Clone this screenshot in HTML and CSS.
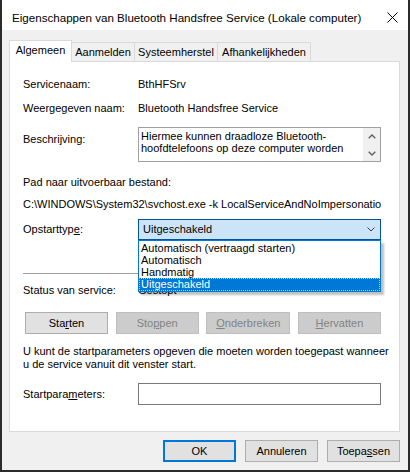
FILE: index.html
```html
<!DOCTYPE html>
<html lang="nl">
<head>
    <meta charset="UTF-8">
    <title>Eigenschappen van Bluetooth Handsfree Service</title>
    <link rel="stylesheet" href="styles.css">
</head>
<body>

<div class="window">
    <div class="titlebar">
        <span class="title">Eigenschappen van Bluetooth Handsfree Service (Lokale computer)</span>
        <svg class="close" width="11" height="11" viewBox="0 0 11 11">
            <path d="M0.5 0.5 L10.5 10.5 M10.5 0.5 L0.5 10.5" stroke="#000" stroke-width="1" fill="none"/>
        </svg>
    </div>

    <div class="main">
        <div class="tabs">
            <div class="tab tab-active tab-general">Algemeen</div>
            <div class="tab tab-logon">Aanmelden</div>
            <div class="tab tab-recovery">Systeemherstel</div>
            <div class="tab tab-deps">Afhankelijkheden</div>
        </div>

        <div class="panel">
            <div class="field">
                <span>Servicenaam:</span>
                <span>BthHFSrv</span>
            </div>
            <div class="field field-display">
                <span>Weergegeven naam:</span>
                <span>Bluetooth Handsfree Service</span>
            </div>
            <div class="field field-desc">
                <span class="desc-label">Beschrijving:</span>
                <div class="desc-box">
                    <div class="desc-text">Hiermee kunnen draadloze Bluetooth-<br>hoofdtelefoons op deze computer worden</div>
                    <div class="scrollbar">
                        <div class="scroll-btn">
                            <svg width="8" height="5" viewBox="0 0 8 5"><path d="M0.7 4.3 L4 1 L7.3 4.3" stroke="#606060" stroke-width="1.4" fill="none"/></svg>
                        </div>
                        <div class="scroll-btn">
                            <svg width="8" height="5" viewBox="0 0 8 5"><path d="M0.7 0.7 L4 4 L7.3 0.7" stroke="#606060" stroke-width="1.4" fill="none"/></svg>
                        </div>
                    </div>
                </div>
            </div>
            <div class="path-label">Pad naar uitvoerbaar bestand:</div>
            <div class="path-value">C:\WINDOWS\System32\svchost.exe -k LocalServiceAndNoImpersonation -p</div>

            <div class="field field-startup">
                <span>Opstarttyp<u>e</u>:</span>
                <div class="combo-wrap">
                    <div class="combo">
                        <span>Uitgeschakeld</span>
                        <svg width="8" height="5" viewBox="0 0 8 5"><path d="M0.5 0.5 L4 4 L7.5 0.5" stroke="#404040" stroke-width="1" fill="none"/></svg>
                    </div>
                    <ul class="combo-list">
                        <li>Automatisch (vertraagd starten)</li>
                        <li>Automatisch</li>
                        <li>Handmatig</li>
                        <li class="selected">Uitgeschakeld</li>
                    </ul>
                </div>
            </div>

            <div class="separator"></div>

            <div class="field field-status">
                <span>Status van service:</span>
                <span>Gestopt</span>
            </div>

            <div class="service-buttons">
                <button class="btn">Sta<u>r</u>ten</button>
                <button class="btn" disabled>Sto<u>p</u>pen</button>
                <button class="btn btn-wide" disabled><u>O</u>nderbreken</button>
                <button class="btn" disabled><u>H</u>ervatten</button>
            </div>

            <p class="hint">U kunt de startparameters opgeven die moeten worden toegepast wanneer<br>u de service vanuit dit venster start.</p>

            <div class="field field-params">
                <span>Startpara<u>m</u>eters:</span>
                <div class="text-input"></div>
            </div>
        </div>

        <div class="dialog-buttons">
            <button class="btn btn-dialog btn-default">OK</button>
            <button class="btn btn-dialog">Annuleren</button>
            <button class="btn btn-dialog">Toepa<u>s</u>sen</button>
        </div>
    </div>
</div>

</body>
</html>
```

FILE: styles.css
```css
* {
    box-sizing: border-box;
}
body {
    margin: 0;
    font-family: "Liberation Sans", Arial, sans-serif;
    font-size: 11px;
    color: #000;
}
.window {
    width: 410px;
    height: 472px;
    border: 2px solid #2b2b2b;
    border-top: 0;
    background-color: #f0f0f0;
    display: flex;
    flex-direction: column;
}
.titlebar {
    height: 30px;
    flex-shrink: 0;
    background-color: #fff;
    display: flex;
    align-items: center;
    padding: 4px 10px 0 10px;
    font-size: 11.6px;
}
.title {
    flex: 1;
    white-space: nowrap;
}
.main {
    flex: 1;
    padding: 10px 8px 0 7px;
}

/* tabs */
.tabs {
    display: flex;
    align-items: flex-end;
    height: 21px;
    position: relative;
    z-index: 1;
}
.tab {
    height: 19px;
    border: 1px solid #d9d9d9;
    border-left: 0;
    border-bottom: 0;
    display: flex;
    align-items: center;
    justify-content: center;
    line-height: 13px;
}
.tab-active {
    height: 22px;
    margin-bottom: -1px;
    padding-bottom: 3px;
    border-left: 1px solid #d9d9d9;
    background-color: #fff;
}
.tab-general { width: 63px; }
.tab-logon { width: 63px; }
.tab-recovery { width: 83px; }
.tab-deps { width: 93px; }

/* tab page */
.panel {
    background-color: #fff;
    border: 1px solid #d9d9d9;
    padding: 16px 18px 26px 13px;
}
.field {
    display: grid;
    grid-template-columns: 115px 1fr;
    line-height: 13px;
    white-space: nowrap;
}
.field-display {
    margin-top: 11px;
}
.field-desc {
    margin-top: 12px;
}
.desc-label {
    margin-top: 6px;
}
.desc-box {
    height: 35px;
    border: 1px solid #a0a0a0;
    display: flex;
}
.desc-text {
    flex: 1;
    padding: 2px 0 0 2px;
    line-height: 12px;
}
.scrollbar {
    width: 17px;
    background-color: #f0f0f0;
    display: flex;
    flex-direction: column;
    justify-content: space-between;
}
.scroll-btn {
    height: 16px;
    display: flex;
    align-items: center;
    justify-content: center;
}
.path-label {
    margin-top: 14px;
    line-height: 13px;
}
.path-value {
    margin-top: 9px;
    line-height: 13px;
    white-space: nowrap;
    overflow: hidden;
}

/* startup type combo */
.field-startup {
    margin-top: 8px;
    align-items: center;
}
.combo-wrap {
    position: relative;
}
.combo {
    height: 21px;
    border: 1px solid #005499;
    background-color: #cce4f7;
    display: flex;
    align-items: center;
    justify-content: space-between;
    padding: 0 5px 0 4px;
}
.combo-list {
    position: absolute;
    top: 21px;
    left: 0;
    right: 0;
    margin: 0;
    padding: 1px 0 0 0;
    list-style: none;
    background-color: #fff;
    border: 1px solid #0078d7;
    box-shadow: 3px 3px 2px rgba(0, 0, 0, 0.25);
    z-index: 2;
}
.combo-list li {
    height: 12px;
    line-height: 12px;
    padding-left: 2px;
}
.combo-list li.selected {
    height: 13px;
    line-height: 13px;
    background-color: #0078d7;
    color: #fff;
    outline: 1px dotted #f3c28c;
    outline-offset: -1px;
}
.separator {
    margin-top: 33px;
    height: 1px;
    background-color: #a0a0a0;
}
.field-status {
    margin-top: 10px;
}

/* buttons */
.btn {
    height: 22px;
    padding: 0;
    font-family: inherit;
    font-size: 11px;
    color: #000;
    background-color: #e1e1e1;
    border: 1px solid #adadad;
    border-radius: 0;
}
.btn:disabled {
    background-color: #cccccc;
    border-color: #bfbfbf;
    color: #838383;
}
.service-buttons {
    margin: 15px 0 0 2px;
    display: flex;
    justify-content: space-between;
}
.service-buttons .btn {
    width: 83px;
}
.service-buttons .btn-wide {
    width: 84px;
}
.hint {
    margin: 11px 0 0 0;
    line-height: 13px;
    white-space: nowrap;
}
.field-params {
    margin-top: 12px;
    align-items: center;
}
.text-input {
    height: 22px;
    border: 1px solid #7a7a7a;
    background-color: #fff;
}
.dialog-buttons {
    margin-top: 8px;
    display: flex;
    justify-content: flex-end;
    gap: 9px;
}
.btn-dialog {
    width: 73px;
}
.btn-default {
    border: 2px solid #0078d7;
}
```
